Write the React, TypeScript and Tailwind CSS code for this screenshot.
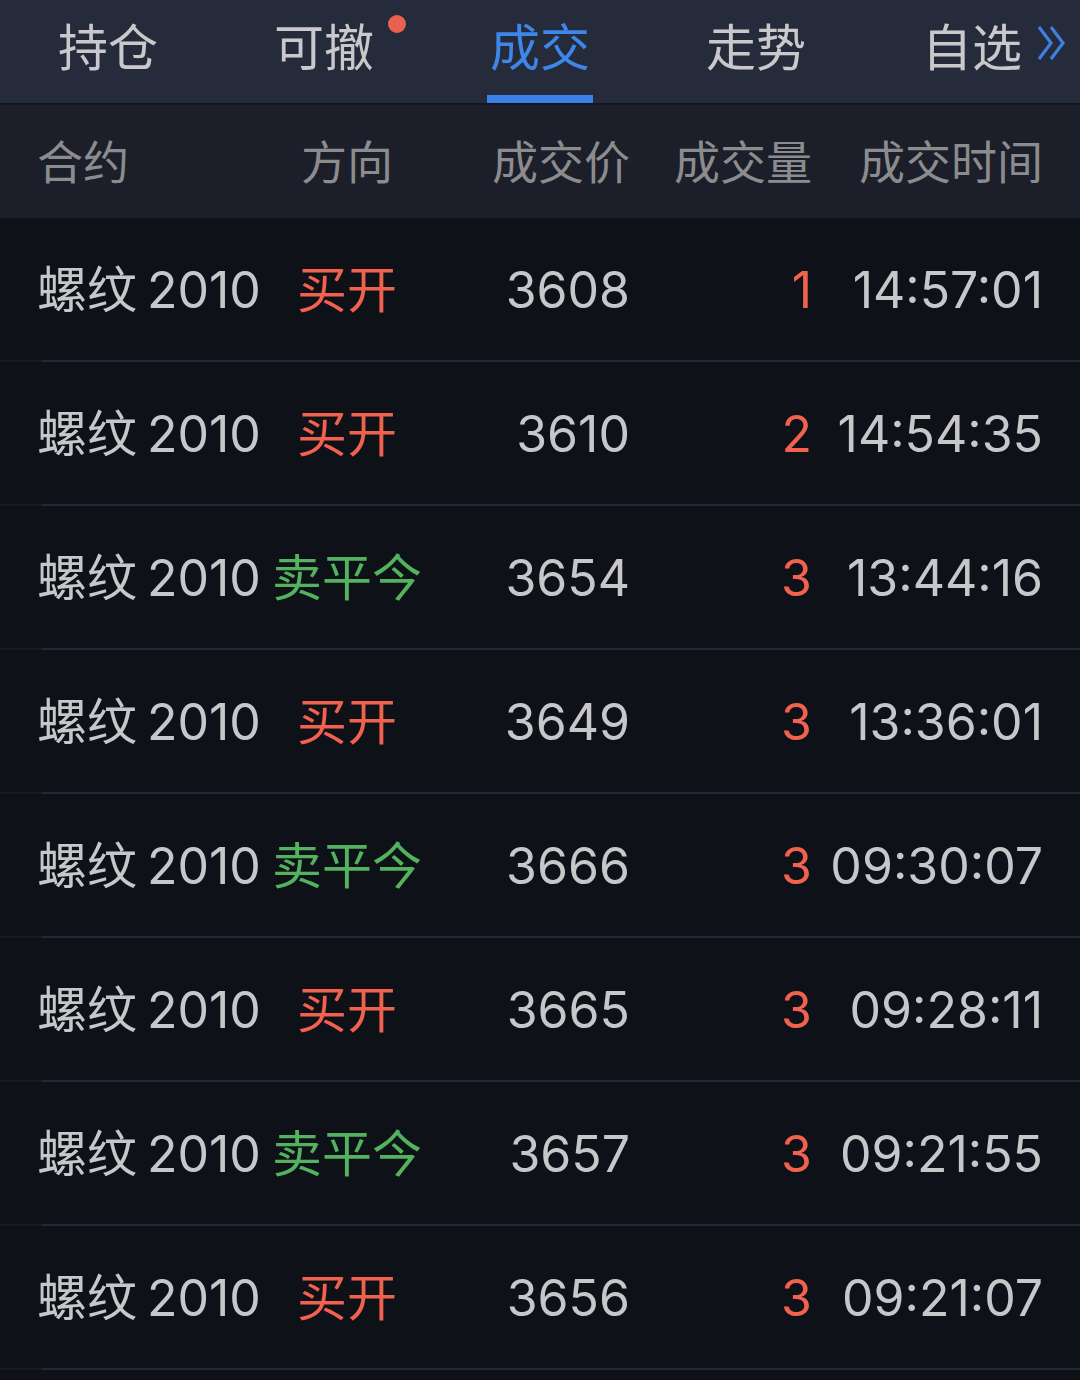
import React from "react";

type Trade = {
  name: string;
  code: string;
  side: "buyOpen" | "sellClose";
  price: string;
  qty: number;
  time: string;
};

const trades: Trade[] = [
  { name: "螺纹", code: "2010", side: "buyOpen", price: "3608", qty: 1, time: "14:57:01" },
  { name: "螺纹", code: "2010", side: "buyOpen", price: "3610", qty: 2, time: "14:54:35" },
  { name: "螺纹", code: "2010", side: "sellClose", price: "3654", qty: 3, time: "13:44:16" },
  { name: "螺纹", code: "2010", side: "buyOpen", price: "3649", qty: 3, time: "13:36:01" },
  { name: "螺纹", code: "2010", side: "sellClose", price: "3666", qty: 3, time: "09:30:07" },
  { name: "螺纹", code: "2010", side: "buyOpen", price: "3665", qty: 3, time: "09:28:11" },
  { name: "螺纹", code: "2010", side: "sellClose", price: "3657", qty: 3, time: "09:21:55" },
  { name: "螺纹", code: "2010", side: "buyOpen", price: "3656", qty: 3, time: "09:21:07" },
];

const tabs = ["持仓", "可撤", "成交", "走势", "自选"];

const cols = "grid grid-cols-[228px_164px_201px_182px_231px] items-center pl-[37px] pr-[37px]";

function Chevrons() {
  return (
    <svg width="32" height="36" viewBox="0 0 32 36" fill="none">
      <path d="M3 2 L15 18 L3 34" stroke="#3f7fe0" strokeWidth="3.2" />
      <path d="M15 2 L27 18 L15 34" stroke="#3f7fe0" strokeWidth="3.2" />
    </svg>
  );
}

export default function App() {
  return (
    <div
      className="w-[1080px] h-[1380px] overflow-hidden bg-[#0e1118]"
      style={{ fontFamily: 'Inter, "Noto Sans CJK SC", sans-serif' }}
    >
      {/* Tabs */}
      <div className="grid grid-cols-5 h-[103px] bg-[#262b3b]">
        {tabs.map((t, i) => (
          <div key={t} className="relative flex items-center justify-center">
            <div className="relative flex items-center pb-[8px]">
              <span
                className={
                  "text-[50px] leading-none " + (i === 2 ? "text-[#3d86ea]" : "text-[#c9c9cb]")
                }
              >
                {t}
              </span>
              {i === 1 && (
                <span className="absolute -right-[32px] -top-[8px] w-[18px] h-[18px] rounded-full bg-[#e8634f]" />
              )}
              {i === 4 && (
                <span className="absolute -right-[46px] top-[2px]">
                  <Chevrons />
                </span>
              )}
            </div>
            {i === 2 && (
              <span className="absolute bottom-0 left-1/2 -translate-x-1/2 w-[106px] h-[8px] bg-[#3b82e8]" />
            )}
          </div>
        ))}
      </div>
      <div className="h-[2px] bg-[#13151c]" />

      {/* Column header */}
      <div className={cols + " h-[113px] bg-[#1c1f2a] text-[46px] leading-none text-[#8c8c8f]"}>
        <span>合约</span>
        <span className="text-center">方向</span>
        <span className="text-right">成交价</span>
        <span className="text-right">成交量</span>
        <span className="text-right">成交时间</span>
      </div>

      {/* Trades */}
      {trades.map((t, i) => (
        <div key={i}>
          <div className={cols + " h-[142px] pt-[2px] text-[50px] leading-none text-[#c7c7c9]"}>
            <span className="whitespace-nowrap">
              {t.name}
              <span className="ml-[10px]">{t.code}</span>
            </span>
            <span
              className={
                "text-center whitespace-nowrap " +
                (t.side === "buyOpen" ? "text-[#f0614e]" : "text-[#52b25e]")
              }
            >
              {t.side === "buyOpen" ? "买开" : "卖平今"}
            </span>
            <span className="text-right">{t.price}</span>
            <span className="text-right text-[#f0614e]">{t.qty}</span>
            <span className="text-right">{t.time}</span>
          </div>
          <div className="flex h-[2px]">
            <div className="w-[42px] bg-[#171a22]" />
            <div className="flex-1 bg-[#232733]" />
          </div>
        </div>
      ))}
    </div>
  );
}
